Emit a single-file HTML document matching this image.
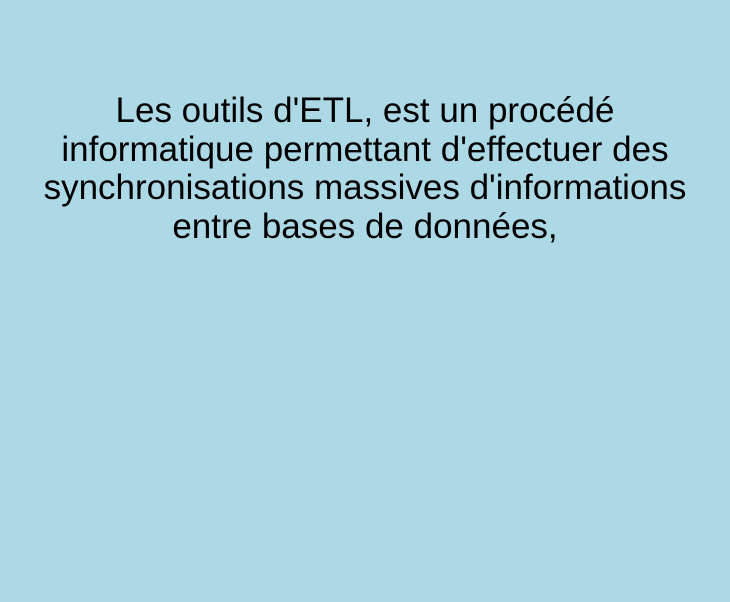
<!DOCTYPE html>
<html><head><meta charset="utf-8"><style>
html,body{margin:0;padding:0;}
body{width:730px;height:602px;background:#ADD8E6;overflow:hidden;position:relative;}
.t{position:absolute;left:0;top:92px;width:730px;text-align:center;font-family:"Liberation Sans",Arial,sans-serif;font-size:35px;line-height:38.7px;color:#000;white-space:nowrap;font-variant-ligatures:none;}
</style></head><body>
<div class="t">Les outils d'ETL, est un procédé<br>informatique permettant d'effectuer des<br>synchronisations massives d'informations<br>entre bases de données,</div>
</body></html>
